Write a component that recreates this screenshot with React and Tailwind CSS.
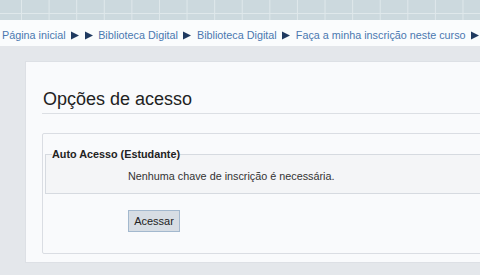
import React from 'react';

function Arrow() {
  return (
    <svg width="8" height="9" viewBox="0 0 8 9" className="shrink-0">
      <path d="M0 0.5 L8 4.5 L0 8.5 Z" fill="#1f3a60" />
    </svg>
  );
}

const crumbs = ['Página inicial', null, 'Biblioteca Digital', 'Biblioteca Digital', 'Faça a minha inscrição neste curso'];

export default function App() {
  return (
    <div className="w-[480px] h-[275px] overflow-hidden bg-[#e4e7eb] font-['Liberation_Sans',Arial,sans-serif] text-[#333]">
      {/* top banner */}
      <div className="h-[20px] bg-[#ccd9de] bg-[linear-gradient(90deg,#dfe8eb_1px,transparent_1px),linear-gradient(180deg,transparent_13px,#dfe8eb_13px,#dfe8eb_14px,transparent_14px)] bg-[length:27.6px_100%,100%_100%] bg-[position:21px_0,0_0] bg-repeat-x" />

      {/* breadcrumb */}
      <div className="h-[26px] bg-[#fafcfd] pt-[9px] pl-[2px] flex items-start gap-[5.5px] text-[10.8px] leading-[13px] text-[#4a78b0] whitespace-nowrap">
        {crumbs.map((c, i) => (
          <React.Fragment key={i}>
            {c && <span>{c}</span>}
            <span className="h-[13px] flex items-center"><Arrow /></span>
          </React.Fragment>
        ))}
      </div>

      {/* main box */}
      <div className="ml-[25px] mt-[15px] w-[520px] bg-[#f9fafc] border border-[#dde0e5] pt-[27px] pl-[16px] pb-[8px]">
        <h2 className="text-[18px] leading-[21px] text-[#222] pl-[1px] pb-[3px] border-b border-[#dcdfe4]">
          Opções de acesso
        </h2>

        <fieldset className="mt-[19px] border border-[#dadde3] rounded-[2px] px-[2px] pt-[14px] pb-[21px]">
          <fieldset className="border border-[#d6dae0] bg-[#f4f5f7] px-[6px] pb-[10px]">
            <legend className="text-[10.8px] leading-[13px] font-bold text-[#222]">Auto Acesso (Estudante)</legend>
            <p className="pt-[9px] pl-[76px] text-[10.8px] leading-[13px] text-[#333]">
              Nenhuma chave de inscrição é necessária.
            </p>
          </fieldset>
          <button className="mt-[16px] ml-[83px] w-[52px] h-[22px] bg-[#d7dde4] border border-[#a3b8ce] text-[11px] text-[#222] font-['Liberation_Sans',Arial,sans-serif]">
            Acessar
          </button>
        </fieldset>
      </div>
    </div>
  );
}
